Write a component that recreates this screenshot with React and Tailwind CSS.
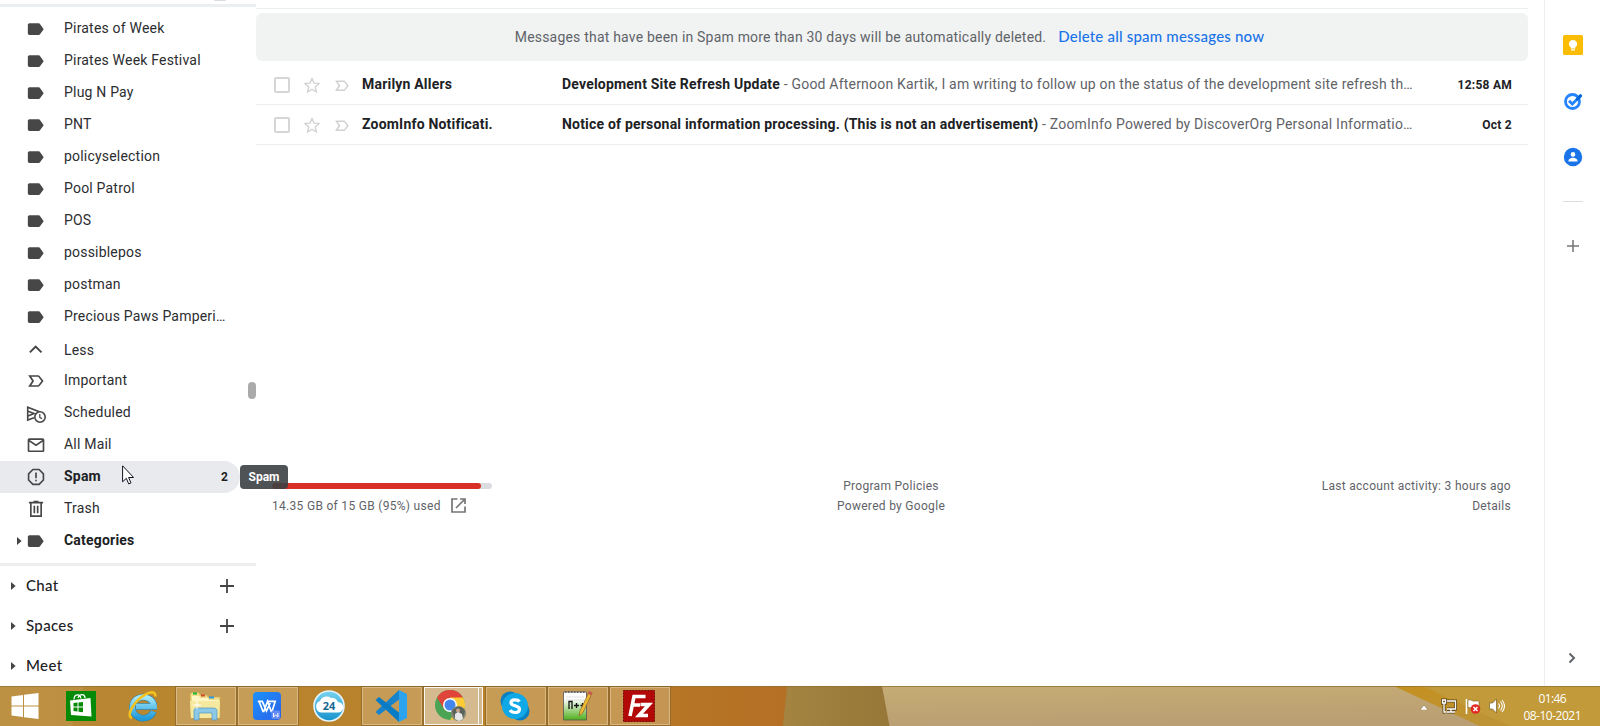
const roboto = "font-['Roboto','Liberation_Sans',sans-serif]";
const sans = "font-['Lato','Open_Sans',sans-serif]";

const labels = [
  "Pirates of Week",
  "Pirates Week Festival",
  "Plug N Pay",
  "PNT",
  "policyselection",
  "Pool Patrol",
  "POS",
  "possiblepos",
  "postman",
  "Precious Paws Pamperi…",
];

const Icon = ({ children, className = "size-5" }) => (
  <svg viewBox="0 0 24 24" fill="currentColor" className={className}>{children}</svg>
);
const LabelIcon = () => (
  <Icon><path d="M17.6 5.84C17.3 5.33 16.67 5 16 5L5 5.01C3.9 5.01 3 5.9 3 7v10c0 1.1.9 1.99 2 1.99L16 19c.67 0 1.27-.33 1.63-.84L22 12l-4.4-6.16z" transform="translate(-.8 .2)" /></Icon>
);
const ImportantPath = () => (
  <path fillRule="evenodd" d="M3 19 7.6 12 3 5h12c.7 0 1.3.3 1.7.9L21.5 12l-4.8 6.1c-.4.6-1 .9-1.7.9zm3.8-2H15l4-5-4-5H6.8l3.3 5z" />
);
const Triangle = ({ className }) => (
  <svg viewBox="0 0 5 8" fill="#444" className={className}><path d="M0 0 4.6 4 0 8z" /></svg>
);
const Plus = ({ className }) => (
  <svg viewBox="0 0 14 14" className={className} stroke="currentColor" strokeWidth="1.8"><path d="M7 0v14M0 7h14" /></svg>
);

function NavRow({ icon, label, count, active, bold, arrow, low }) {
  return (
    <div className={`flex h-8 shrink-0 items-center pr-3 ${active ? "mr-4 rounded-r-full bg-[#e8eaed]" : ""} ${bold ? "font-bold text-[#202124]" : "text-[#2c2d30]"}`}>
      <div className="flex w-[26px] justify-end pr-1">{arrow && <Triangle className="h-2 w-[5px]" />}</div>
      <div className="flex w-[38px] text-[#474747]">{icon}</div>
      <span className={`flex-1 pb-px text-sm whitespace-nowrap tracking-[0.2px] ${low ? "pt-[2px]" : "mb-px"}`}>{label}</span>
      {count && <span className="text-xs">{count}</span>}
    </div>
  );
}

function AppGroup({ label, add }) {
  return (
    <div className="flex h-10 shrink-0 items-center pl-[11px] pr-[22px] text-[#202124]">
      <Triangle className="h-2 w-[5px]" />
      <span className="flex-1 pb-px pl-[10px] font-['Lato',sans-serif] text-[15px] font-medium tracking-[0.35px]">{label}</span>
      {add && <Plus className="size-[14px] text-[#444]" />}
    </div>
  );
}

function Sidebar() {
  return (
    <aside className={`relative flex w-64 shrink-0 flex-col ${roboto}`}>
      <div className="flex h-1 justify-end pr-[30px]"><div className="h-px w-3 rounded-b bg-[#dadce0]" /></div>
      <div className="mb-[6px] h-[3px] shrink-0 bg-[#eceff1]" />
      {labels.map((l) => <NavRow key={l} icon={<LabelIcon />} label={l} />)}
      <NavRow low label="Less" icon={<Icon><path d="m11.600 7.500-7.800 7.800 1.600 1.600 6.200-6.200 6.200 6.200 1.600-1.600z" /></Icon>} />
      <NavRow label="Important" icon={<Icon><g transform="translate(-.4 0)"><ImportantPath /></g></Icon>} />
      <NavRow label="Scheduled" icon={
        <svg viewBox="0 0 20 20" className="size-5" fill="none" stroke="currentColor" strokeWidth="1.6">
          <path d="M8 14.8 1.7 17V4.2L14 9" /><path d="M2 8.3 8 10.5 2 13" /><circle cx="14" cy="14" r="5.2" fill="#fff" /><path d="M13.8 11v3.3l2.3 1.4" strokeWidth="1.2" />
        </svg>} />
      <NavRow label="All Mail" icon={<Icon><path fillRule="evenodd" d="M4 4h16c1.1 0 2 .9 2 2v12.500c0 1.100-.9 2-2 2H4c-1.100 0-2-.9-2-2V6c0-1.100.9-2 2-2zM4 18.500h16V8l-8 5.500L4 8zM4.500 6 12 11.200 19.500 6z" /></Icon>} />
      <NavRow label="Spam" count="2" active bold icon={<Icon><g fill="none" stroke="currentColor" strokeWidth="2"><path d="M8.300 3h7.400l5.200 5.200v7.400l-5.200 5.200H8.300l-5.200-5.200V8.200z" strokeLinejoin="round" /><path d="M12 6.500v7M12 15.200v2" /></g></Icon>} />
      <NavRow label="Trash" icon={<Icon><g fill="none" stroke="currentColor" strokeWidth="2"><path d="M3.500 4.300h17M9 3.100h6M5.800 4.500v16h12.400v-16M10 8v9M14 8v9" /></g></Icon>} />
      <NavRow label="Categories" bold arrow icon={<LabelIcon />} />
      <div className="mt-[6px] h-[3px] shrink-0 bg-[#eeeeef]" />
      <AppGroup label="Chat" add />
      <AppGroup label="Spaces" add />
      <AppGroup label="Meet" />
      <div className="absolute top-[382px] right-0 h-[17px] w-2 rounded-full bg-[#aaa]" />
      <div className="absolute top-[465px] left-60 z-10 flex h-6 w-12 items-center justify-center rounded bg-[#3c4043]/90 text-xs font-bold text-white">Spam</div>
      <svg viewBox="0 0 12 20" className="absolute top-[465px] left-[122px] z-10 h-5 w-3"><path d="M.6.8v16l3.700-3.500 2.400 5.600 2.300-1-2.400-5.400h5z" fill="#fff" stroke="#112" /></svg>
    </aside>
  );
}

function MailRow({ from, subject, snippet, date }) {
  return (
    <div className="flex h-10 items-center border-b border-[#eceff1] pr-4 pl-[18px] text-sm text-[#202124]">
      <div className="mt-px mr-[13px] size-4 rounded-[2px] border-2 border-[#d6d6d6]" />
      <svg viewBox="0 0 24 24" className="mr-[12px] size-[18px] text-[#d2d2d2]" fill="none" stroke="currentColor" strokeWidth="1.800"><path d="m12 3.200 2.600 6.300 6.800.6-5.200 4.400 1.600 6.700-5.800-3.600-5.800 3.600 1.600-6.700-5.200-4.400 6.800-.6z" /></svg>
      <Icon className="mr-[11px] size-[18px] text-[#d2d2d2]"><g transform="translate(-.3 1)"><ImportantPath /></g></Icon>
      <div className="w-[200px] pb-[2px] font-bold whitespace-nowrap tracking-[0.2px]">{from}</div>
      <div className="flex flex-1 pb-[2px] whitespace-pre tracking-[0.2px]">
        <span className="font-bold">{subject}</span>
        <span className="text-[#5f6368]"> - {snippet}</span>
      </div>
      <div className="text-xs font-bold tracking-[0.25px]">{date}</div>
    </div>
  );
}

function Main() {
  return (
    <main className={`flex w-[1272px] shrink-0 flex-col pt-2 ${roboto}`}>
      <div className="mb-1 h-px bg-[#eceff1]" />
      <div className="mb-1 flex h-12 items-center justify-center rounded-md bg-[#f1f3f3] pr-[5px] pb-px text-sm">
        <span className="text-[#5f6368] tracking-[0.2px]">Messages that have been in Spam more than 30 days will be automatically deleted.</span>
        <span className="ml-3 font-['Lato',sans-serif] text-[15px] font-medium tracking-[0.2px] text-[#1a73e8]">Delete all spam messages now</span>
      </div>
      <MailRow from="Marilyn Allers" subject="Development Site Refresh Update" snippet="Good Afternoon Kartik, I am writing to follow up on the status of the development site refresh th…" date="12:58 AM" />
      <MailRow from="ZoomInfo Notificati." subject="Notice of personal information processing. (This is not an advertisement)" snippet="ZoomInfo Powered by DiscoverOrg Personal Informatio…" date="Oct 2" />
      <footer className="mt-[331px] grid grid-cols-3 pr-[17px] pl-4 text-xs leading-5 tracking-[0.3px] text-[#5f6368]">
        <div>
          <div className="mt-[7px] mb-[7px] h-[6px] w-[220px] overflow-hidden rounded-full bg-[#dadce0]"><div className="h-full w-[95%] rounded-full bg-[#d93025]" /></div>
          <div className="flex items-center gap-[10px]">14.35 GB of 15 GB (95%) used
            <svg viewBox="0 0 15 15" className="mb-[2px] size-[15px]" fill="none" stroke="#747775" strokeWidth="1.700"><path d="M6.500 1H1v13h13V8.500M9 1h5v5M14 1 5 10" /></svg>
          </div>
        </div>
        <div className="pr-px text-center"><div>Program Policies</div><div>Powered by Google</div></div>
        <div className="text-right"><div>Last account activity: 3 hours ago</div><div>Details</div></div>
      </footer>
    </main>
  );
}

function SidePanel() {
  return (
    <aside className="ml-4 flex w-14 flex-col items-center border-l border-[#eceff1]">
      <svg viewBox="0 0 20 20" className="mt-[35px] size-5"><rect width="20" height="20" rx="1.500" fill="#fbbc04" /><path d="M10 5a4 4 0 0 0-2.300 7.300V13.500h4.600v-1.200A4 4 0 0 0 10 5zM8 14.300h4v1.200H8z" fill="#fff" /></svg>
      <svg viewBox="0 0 20 20" className="mt-[36px] size-5" fill="none"><circle cx="9.500" cy="10.500" r="7" stroke="#2684fc" strokeWidth="2.800" /><path d="m6 9.800 3.300 3.300 6-6" stroke="#2684fc" strokeWidth="2.800" /><path d="m14.500 7.800 3-3" stroke="#0066da" strokeWidth="3.200" strokeLinecap="round" /></svg>
      <svg viewBox="0 0 20 20" className="mt-[36px] size-5"><circle cx="10" cy="10" r="9.200" fill="#1a73e8" /><circle cx="10" cy="7.400" r="2.300" fill="#fff" /><path d="M5.500 13.800c0-2 2.800-3 4.500-3s4.500 1 4.500 3v.8h-9z" fill="#fff" /></svg>
      <div className="mt-[34px] h-px w-5 bg-[#dadce0]" />
      <Plus className="mt-[38px] size-3 text-[#777]" />
      <svg viewBox="0 0 8 12" className="mt-auto mr-[2px] mb-[22px] size-3" fill="none" stroke="#5f6368" strokeWidth="2"><path d="m1.500 1.500 4.500 4.500-4.500 4.500" /></svg>
    </aside>
  );
}

const Task = ({ children }) => (
  <div className="flex h-[38px] w-[60px] shrink-0 items-center justify-center border border-[#dfc190]/75 bg-[#d2b078]/55 pr-[2px] outline outline-[#80602b]/60">{children}</div>
);

function Taskbar() {
  return (
    <footer className="relative flex h-10 shrink-0 overflow-hidden bg-[#b98730]">
      <svg viewBox="0 0 1600 40" className="absolute inset-0 h-full w-full" preserveAspectRatio="none">
        <defs>
          <linearGradient id="base"><stop offset="0" stopColor="#b88a3b" /><stop offset=".2" stopColor="#b98630" /><stop offset=".65" stopColor="#b88028" /><stop offset="1" stopColor="#b56f25" /></linearGradient>
          <linearGradient id="sand" x2=".2" y2="1"><stop stopColor="#c5ac74" /><stop offset="1" stopColor="#b99f73" /></linearGradient>
          <linearGradient id="olive"><stop stopColor="#a48440" /><stop offset="1" stopColor="#977738" /></linearGradient>
          <linearGradient id="gold" x2=".5" y2="1"><stop stopColor="#c5901f" /><stop offset="1" stopColor="#be9335" /></linearGradient>
        </defs>
        <path fill="url(#base)" d="M0 0h790v40H0z" />
        <path fill="#c49a50" opacity=".45" d="M0 0h84L72 40H0z" />
        <path fill="url(#olive)" d="M787 0h100l4 40H783z" />
        <path fill="url(#sand)" d="M882 0h600v40H889.500z" />
        <path fill="#c29a39" d="M1394 0h206v40h-120z" />
        <path fill="url(#gold)" d="M1394 0h28l88 40h-30z" />
        <path fill="#8e6c30" opacity=".7" d="M0 0h1600v1H0z" />
      </svg>
      <div className="relative flex h-10 flex-1 items-center">
        <svg viewBox="0 0 27 26" className="ml-[11px] h-[26px] w-[28px] shrink-0" fill="#fff"><path d="M0 3.500 11.500 2v10.500H0zM12.500 1.800 27 0v12.500H12.500zM0 13.500h11.500V24L0 22.500zM12.500 13.500H27V26l-14.500-1.800z" /></svg>
        <svg viewBox="0 0 30 30" className="ml-[27px] size-[30px] shrink-0"><path fill="#078a07" d="M0 0h30v30H0z" /><path d="M4 9.500 24.500 7l1 18.500L5 24z" fill="#fff" /><path d="M8 8.500C8 3 14 2 15 7.500M12 7c2-5 7-4 7 0" fill="none" stroke="#fff" strokeWidth="1.200" /><path d="m7.500 12 4-.5v4h-4zM12.500 11.400l4.500-.5v4.600h-4.500zM7.500 16.500h4v4l-4-.4zM12.500 16.500H17v4.700l-4.500-.5z" fill="#078a07" /></svg>
        <svg viewBox="0 0 30 32" className="ml-[31px] h-8 w-[30px] shrink-0" fill="none"><defs><linearGradient id="ie" x2="0" y2="1"><stop stopColor="#a5e9fb" /><stop offset="1" stopColor="#229bd9" /></linearGradient></defs><path d="M26.500 21.500a11 10.500 0 1 1 .7-5H9" stroke="#227dad" strokeWidth="6.500" /><path d="M26.500 21.500a11 10.500 0 1 1 .7-5H9" stroke="url(#ie)" strokeWidth="5.500" /><path d="M5 28c-6-2 .5-14 9.500-21 6-4.500 14-7.500 14-.5" stroke="#f5c21d" strokeWidth="2.600" /></svg>
        <div className="ml-[19px] flex items-center gap-[2px]">
          <Task><svg viewBox="0 0 32 30" className="h-[30px] w-8"><path fill="#f0dc89" stroke="#caa94e" strokeWidth=".6" d="M1 3 3 1.500h7l1 2.500h7l1 2h12V27H2z" /><path fill="#fff6c4" d="M3 5h7l1 2h8l1 2h10v6H3z" /><path d="M4 2.500h4" stroke="#16b83a" strokeWidth="2" /><path d="M12 4.500h4" stroke="#d5452a" strokeWidth="2" /><path d="M20 6.500h5" stroke="#2796dc" strokeWidth="2" /><path fill="#f7e8a0" d="M1 10h30l-1 17H2z" /><path d="M5 29V20c0-3 2-3 4-3h15c3 0 4 1 4 3v9h-5v-7H10v7z" fill="#8cc9e8" stroke="#4e97bd" strokeWidth=".7" /><path d="M8 10v8M4 14h8" stroke="#fff" /></svg></Task>
          <Task><svg viewBox="0 0 28 28" className="size-7"><defs><linearGradient id="wps" x2="1" y2="1"><stop stopColor="#1b91fb" /><stop offset="1" stopColor="#2c63e8" /></linearGradient></defs><rect width="28" height="28" rx="4" fill="url(#wps)" /><path d="M4.800 9.300h4.500l4.200 9.700 3.700-8M6 9.300l4 10.200h.8l3.800-10.200 3.600 10.200h.8l3.200-10.200h-8" fill="none" stroke="#fff" strokeWidth="1.700" /><rect x="18.500" y="18.500" width="8.500" height="8.500" rx="1.500" fill="#658cf4" /><path d="M20.500 21v4l2.200-2 2.200 2v-4" fill="none" stroke="#fff" strokeWidth="1" /></svg></Task>
          <div className="flex w-[60px] justify-center pr-[2px]"><svg viewBox="0 0 32 32" className="size-8"><defs><linearGradient id="cloud" x2="0" y2="1"><stop stopColor="#78d3ef" /><stop offset="1" stopColor="#1692cd" /></linearGradient></defs><circle cx="16" cy="16" r="15" fill="url(#cloud)" stroke="#e5f5fb" strokeWidth="1.600" /><path d="M8 22.500a6 6 0 0 1-1-11.500 7 7 0 0 1 11-3 6 6 0 0 1 7 4 5 5 0 0 1 0 10.500z" fill="#fff" /><text x="16" y="20" textAnchor="middle" fontFamily="Open Sans, sans-serif" fontSize="11" fontWeight="700" fill="#176891">24</text></svg></div>
          <Task><svg viewBox="0 0 32 32" className="size-8"><path d="M24 0v9.500L4 25l-3.500-3z" fill="#1683cb" /><path d="M24 32v-9.500L4 7 .5 10z" fill="#087bc5" /><path d="m24 0 8 4v24l-8 4z" fill="#2ca3ef" /></svg></Task>
          <div className="flex w-[60px]">
            <div className="flex h-[38px] w-[55px] items-center justify-center border border-white/90 bg-[#decdb0]/75 pr-[2px] outline outline-[#80602b]/60">
              <svg viewBox="0 0 32 32" className="size-8"><circle cx="15" cy="15" r="15" fill="#4aa454" /><path d="M15 15 2 7.500A15 15 0 0 1 28 7.500z" fill="#df453a" /><path d="M15 7.500h13A15 15 0 0 1 15 30l7-11z" fill="#fecb35" /><path d="M2 7.500 9 19l6-11.500z" fill="#df453a" /><circle cx="15" cy="15" r="7" fill="#fff" /><circle cx="15" cy="15" r="5.500" fill="#4386ee" /><circle cx="23.500" cy="23.500" r="7.500" fill="#848773" /><path d="M17 21c5-6 10-5 13 0l-2 7-4-6-4 7z" fill="#59635a" /><circle cx="23" cy="20.500" r="2" fill="#c9a58e" /><path d="m20 24 3-2 4 2 1 5-4 2-4-2z" fill="#e6e8e8" /></svg>
            </div>
            <div className="h-[38px] w-1 border-y border-r border-white/90 bg-[#decdb0]/75" />
          </div>
          <Task><svg viewBox="0 0 32 32" className="size-8"><circle cx="11" cy="11" r="9.500" fill="#087fc0" /><circle cx="21" cy="21" r="9.500" fill="#087fc0" /><circle cx="16" cy="16" r="13" fill="#10a8e6" /><path d="M20.500 11.500c-1.500-2-8.500-2.700-8.500 1.200 0 4 8.500 2.200 8.500 6.500 0 4.500-7.500 4-9.500 1" fill="none" stroke="#fff" strokeWidth="3.200" /></svg></Task>
          <Task><svg viewBox="0 0 32 32" className="size-8"><defs><linearGradient id="note" x2="0" y2="1"><stop offset=".25" stopColor="#fff" /><stop offset="1" stopColor="#4fae1c" /></linearGradient></defs><path fill="url(#note)" stroke="#555" strokeWidth=".8" d="M2.500 2h23v28h-23z" /><path d="M4 2h21" stroke="#666" strokeWidth="2" strokeDasharray="1.500 1.500" /><path d="M5 7h18M5 10h18" stroke="#ccc" strokeWidth=".6" /><path d="M8 19v-7.500h3V19M13 15.500h5M15.500 13v5M19.500 15.500h4M21.500 13v5" fill="none" stroke="#111" strokeWidth="1.300" /><path d="m18 26 1-5 9-19 3 1.500-9 19z" fill="#edbb35" stroke="#8b6221" strokeWidth=".7" /><path d="m28 1 3.500 1.500-1.300 3-3.500-1.700z" fill="#c55c4c" /></svg></Task>
          <Task><svg viewBox="0 0 32 32" className="size-8"><rect x=".5" y=".5" width="31" height="31" fill="#b30808" stroke="#700" strokeDasharray="2 1" /><path d="M7 26 11 6.500h11.500M9 15h8M17.500 14.500H26L16 25.500h9" fill="none" stroke="#fff" strokeWidth="3.600" /></svg></Task>
        </div>
      </div>
      <div className="relative flex items-center pr-[19px] text-white">
        <svg viewBox="0 0 8 5" className="mt-[2px] mr-[13px] h-[5px] w-2"><path d="M4 0 8 5H0z" fill="#fff" stroke="#654c1d" strokeWidth=".4" /></svg>
        <svg viewBox="0 0 16 16" className="mr-2 size-4"><g fill="none" stroke="#5b4519" strokeWidth="3"><path d="M6 3h8.500v8H6M10 11v3M6 14h8M1.500 2h3v3h-3zM3 5v9h2" /></g><g fill="none" stroke="#fff" strokeWidth="1.300"><path d="M6 3h8.500v8H6M10 11v3M6 14h8M1.500 2h3v3h-3zM3 5v9h2" /></g></svg>
        <svg viewBox="0 0 16 16" className="mr-2 size-4"><path d="M1.500 1v15" stroke="#fff" strokeWidth="1.600" /><path d="M3 2c4-1 4 2 7 1h4v7h-4c-3 1-4-1-7-.5z" fill="#fff" stroke="#6b511f" strokeWidth=".5" /><circle cx="10.500" cy="11" r="4.800" fill="#df2b24" /><path d="m8.500 9 4 4m0-4-4 4" stroke="#fff" strokeWidth="1.500" /></svg>
        <svg viewBox="0 0 16 16" className="mr-[18px] size-4"><path d="M.5 5h3L7.500 1v14l-4-4h-3z" fill="#fff" stroke="#654c1d" strokeWidth=".6" /><path d="M9.500 5.500q2 2.500 0 5M11.500 3.500q3.500 4.500 0 9M13 2q5 6 0 12" fill="none" stroke="#fff" strokeWidth="1.100" /></svg>
        <div className="pt-px text-center font-['Open_Sans',sans-serif] text-xs leading-[17px]"><div className="tracking-[-0.6px]">01:46</div><div className="tracking-[-0.5px]">08-10-2021</div></div>
      </div>
    </footer>
  );
}

export default function App() {
  return (
    <div className={`flex h-[726px] w-[1600px] flex-col overflow-hidden bg-white ${sans}`}>
      <div className="flex h-[686px] shrink-0"><Sidebar /><Main /><SidePanel /></div>
      <Taskbar />
    </div>
  );
}
